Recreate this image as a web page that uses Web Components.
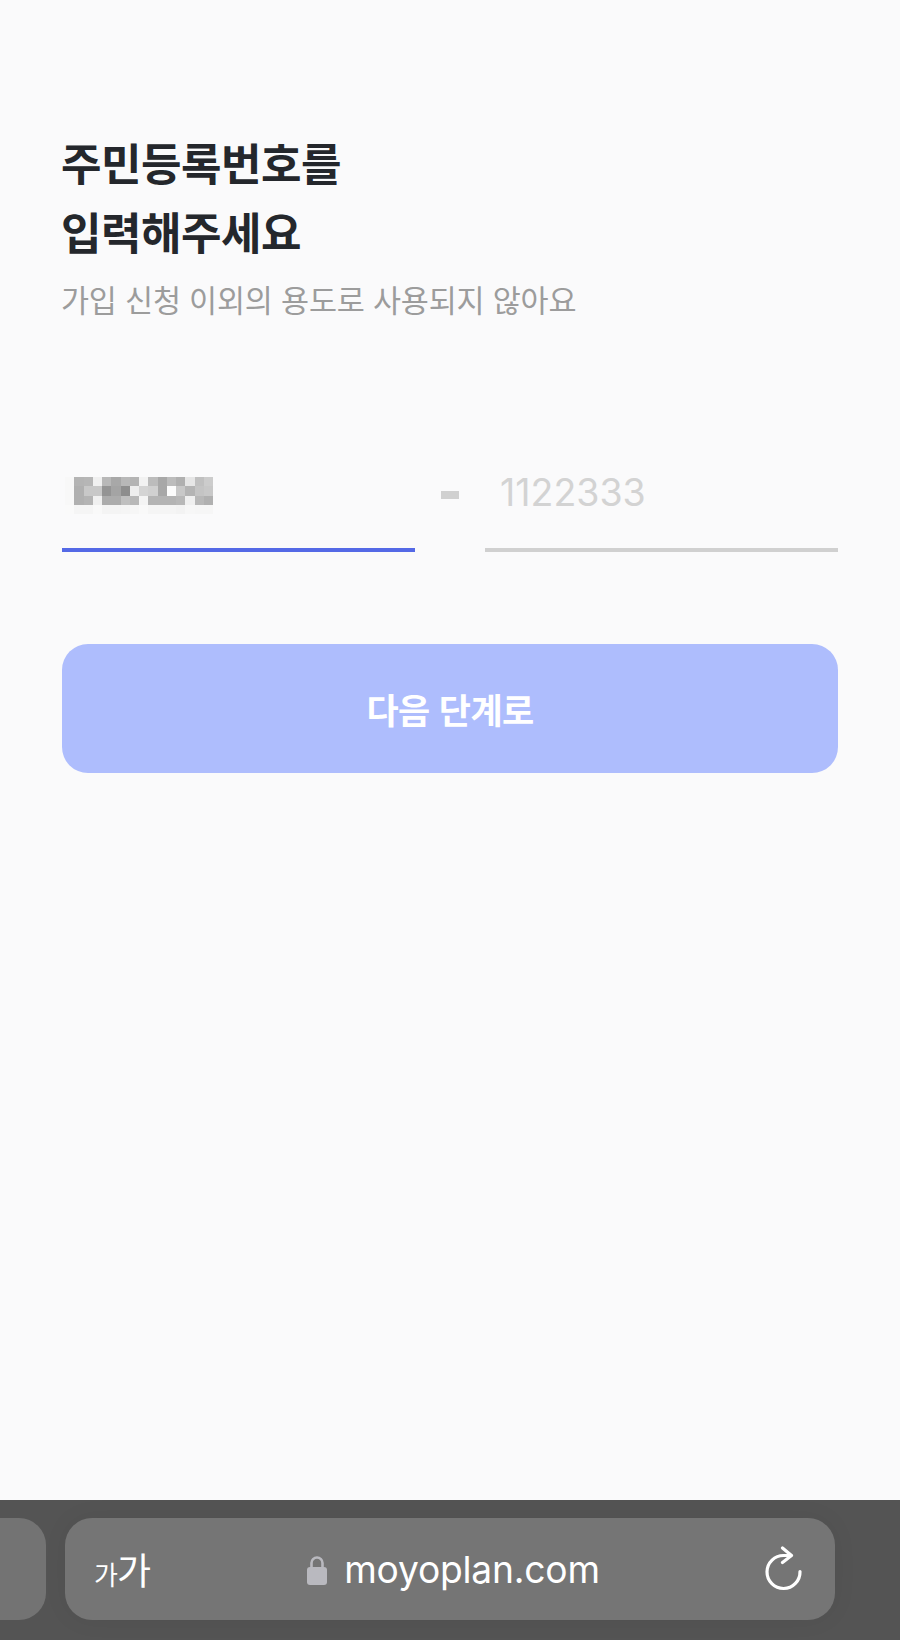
<!DOCTYPE html>
<html lang="ko">
<head>
<meta charset="utf-8">
<title>주민등록번호 입력</title>
<style>
    html, body { margin: 0; padding: 0; background: #fafafb; }
    body { font-family: Inter, "Noto Sans CJK KR", sans-serif; }
</style>
</head>
<body>
<signup-screen>
    <step-heading>
        <span slot="title">주민등록번호를<br>입력해주세요</span>
        <span slot="sub">가입 신청 이외의 용도로 사용되지 않아요</span>
    </step-heading>
    <rrn-form></rrn-form>
    <next-button>다음 단계로</next-button>
</signup-screen>
<browser-bar url="moyoplan.com"></browser-bar>

<script>
// ** page column **
class SignupScreen extends HTMLElement {
    constructor() {
        super();
        this.attachShadow({ mode: 'open' });
        this.shadowRoot.innerHTML = `
            <style>
                :host {
                    display: flex;
                    flex-direction: column;
                    box-sizing: border-box;
                    height: 1500px;
                    padding: 128px 62px 0;
                    background: #fafafb;
                }
            </style>
            <slot></slot>
        `;
    }
}
customElements.define('signup-screen', SignupScreen);

// ** title + description **
class StepHeading extends HTMLElement {
    constructor() {
        super();
        this.attachShadow({ mode: 'open' });
        this.shadowRoot.innerHTML = `
            <style>
                :host { display: block; }
                .title {
                    margin-left: -1px;
                    font-family: "Noto Sans CJK KR", sans-serif;
                    font-size: 44px;
                    font-weight: 700;
                    line-height: 69px;
                    letter-spacing: -0.5px;
                    color: #24272c;
                }
                .sub {
                    margin-top: 11px;
                    margin-left: -1px;
                    font-family: "Noto Sans CJK KR", sans-serif;
                    font-size: 30.5px;
                    font-weight: 400;
                    line-height: 44px;
                    letter-spacing: -0.2px;
                    color: #9c9c9c;
                }
            </style>
            <div class="title"><slot name="title"></slot></div>
            <div class="sub"><slot name="sub"></slot></div>
        `;
    }
}
customElements.define('step-heading', StepHeading);

// ** mosaic that hides the typed digits **
class PixelMask extends HTMLElement {
    constructor() {
        super();
        this.attachShadow({ mode: 'open' });
        const rows = [
            'f8 b4 b6 f0 b8 a8 b8 b4 f2 bc a8 bc b0 e6 c0 cc',
            'f8 b0 c8 c8 94 a4 8e ee d4 d0 a8 fc c8 b4 c4 c8',
            'f8 b0 b4 f0 ac ac c0 b8 f4 b4 b4 b4 b8 f0 b8 b0',
            'fa f5 f5 f9 f4 f4 f5 f6 f9 f5 f5 f5 f3 f7 f6 f6'
        ];
        const cells = rows.join(' ').split(' ')
            .map(c => `<i style="background:#${c}${c}${c}"></i>`).join('');
        this.shadowRoot.innerHTML = `
            <style>
                :host {
                    display: grid;
                    grid-template-columns: repeat(16, 9.25px);
                    grid-auto-rows: 9.25px;
                    width: 148px;
                }
            </style>
            ${cells}
        `;
    }
}
customElements.define('pixel-mask', PixelMask);

// ** one underlined input **
class RrnField extends HTMLElement {
    constructor() {
        super();
        this.attachShadow({ mode: 'open' });
        this.shadowRoot.innerHTML = `
            <style>
                :host {
                    display: flex;
                    flex-direction: column;
                    justify-content: flex-end;
                    flex: 0 0 353px;
                    height: 90px;
                }
                .value {
                    flex: 1;
                    display: flex;
                    align-items: center;
                    padding-left: var(--value-left, 15px);
                    padding-bottom: 25px;
                    font-size: 37.5px;
                    color: #d3d3d3;
                }
                .line { height: 4px; background: var(--line, #d0d0d0); }
            </style>
            <div class="value"><slot></slot></div>
            <div class="line"></div>
        `;
    }
}
customElements.define('rrn-field', RrnField);

class RrnForm extends HTMLElement {
    constructor() {
        super();
        this.attachShadow({ mode: 'open' });
        this.shadowRoot.innerHTML = `
            <style>
                :host {
                    display: flex;
                    justify-content: space-between;
                    margin-top: 141px;
                }
                .first { --line: #5469e6; --value-left: 3px; }
                .second { --value-left: 15px; }
                .dash {
                    flex: 1;
                    display: flex;
                    justify-content: center;
                    padding-top: 29px;
                }
                .dash i { width: 18px; height: 8px; background: #d0d0d0; }
                pixel-mask { margin-top: 6px; }
            </style>
            <rrn-field class="first"><pixel-mask></pixel-mask></rrn-field>
            <div class="dash"><i></i></div>
            <rrn-field class="second">1122333</rrn-field>
        `;
    }
}
customElements.define('rrn-form', RrnForm);

// ** main action **
class NextButton extends HTMLElement {
    constructor() {
        super();
        this.attachShadow({ mode: 'open' });
        this.shadowRoot.innerHTML = `
            <style>
                :host { display: block; margin-top: 92px; }
                button {
                    display: block;
                    width: 100%;
                    height: 129px;
                    border: 0;
                    border-radius: 26px;
                    background: #aebdfd;
                    color: #fff;
                    font-family: "Noto Sans CJK KR", sans-serif;
                    font-size: 35px;
                    font-weight: 700;
                    letter-spacing: -0.6px;
                }
            </style>
            <button><slot></slot></button>
        `;
    }
}
customElements.define('next-button', NextButton);

// ** Safari address bar **
class BrowserBar extends HTMLElement {
    constructor() {
        super();
        this.attachShadow({ mode: 'open' });
        const url = this.getAttribute('url');
        this.shadowRoot.innerHTML = `
            <style>
                :host {
                    display: flex;
                    box-sizing: border-box;
                    height: 140px;
                    padding: 18px 65px 20px 0;
                    gap: 19px;
                    background: #545454;
                }
                .tab {
                    flex: 0 0 46px;
                    background: #737373;
                    border-radius: 0 27px 27px 0;
                }
                .pill {
                    flex: 1;
                    position: relative;
                    display: flex;
                    align-items: center;
                    justify-content: center;
                    background: #757575;
                    border-radius: 27px;
                    box-shadow: 0 0 24px rgba(0,0,0,0.06);
                    color: #fff;
                }
                .aa {
                    position: absolute;
                    left: 29px;
                    top: 28px;
                    font-family: "Noto Sans CJK KR", sans-serif;
                    font-weight: 400;
                    line-height: 46px;
                    white-space: nowrap;
                }
                .aa .s { font-size: 26px; }
                .aa .b { font-size: 37px; margin-left: -1px; }
                .site { display: flex; align-items: center; gap: 17px; margin: 2px 0 0 5px; }
                .site svg { margin-left: 1px; margin-right: -1px; }
                .url { font-size: 37.2px; line-height: 46px; letter-spacing: -0.2px; }
                .reload { position: absolute; left: 700px; top: 28px; }
            </style>
            <div class="tab"></div>
            <div class="pill">
                <span class="aa"><span class="s">가</span><span class="b">가</span></span>
                <div class="site">
                    <svg width="22" height="30" viewBox="0 0 22 30">
                        <path d="M5.5 13V8a5.5 5.5 0 0 1 11 0v5" fill="none" stroke="#b9b9bf" stroke-width="2.6"/>
                        <rect x="1" y="12" width="20" height="18" rx="3" fill="#b9b9bf"/>
                    </svg>
                    <span class="url">${url}</span>
                </div>
                <svg class="reload" width="38" height="46" viewBox="0 0 38 46" fill="none" stroke="#fff" stroke-width="3.2" stroke-linecap="round" stroke-linejoin="round">
                    <path d="M35 25.5A16.5 16.5 0 1 1 19 9.5h5"/>
                    <path d="M17.5 2l9 7.5-9 7"/>
                </svg>
            </div>
        `;
    }
}
customElements.define('browser-bar', BrowserBar);
</script>
</body>
</html>
